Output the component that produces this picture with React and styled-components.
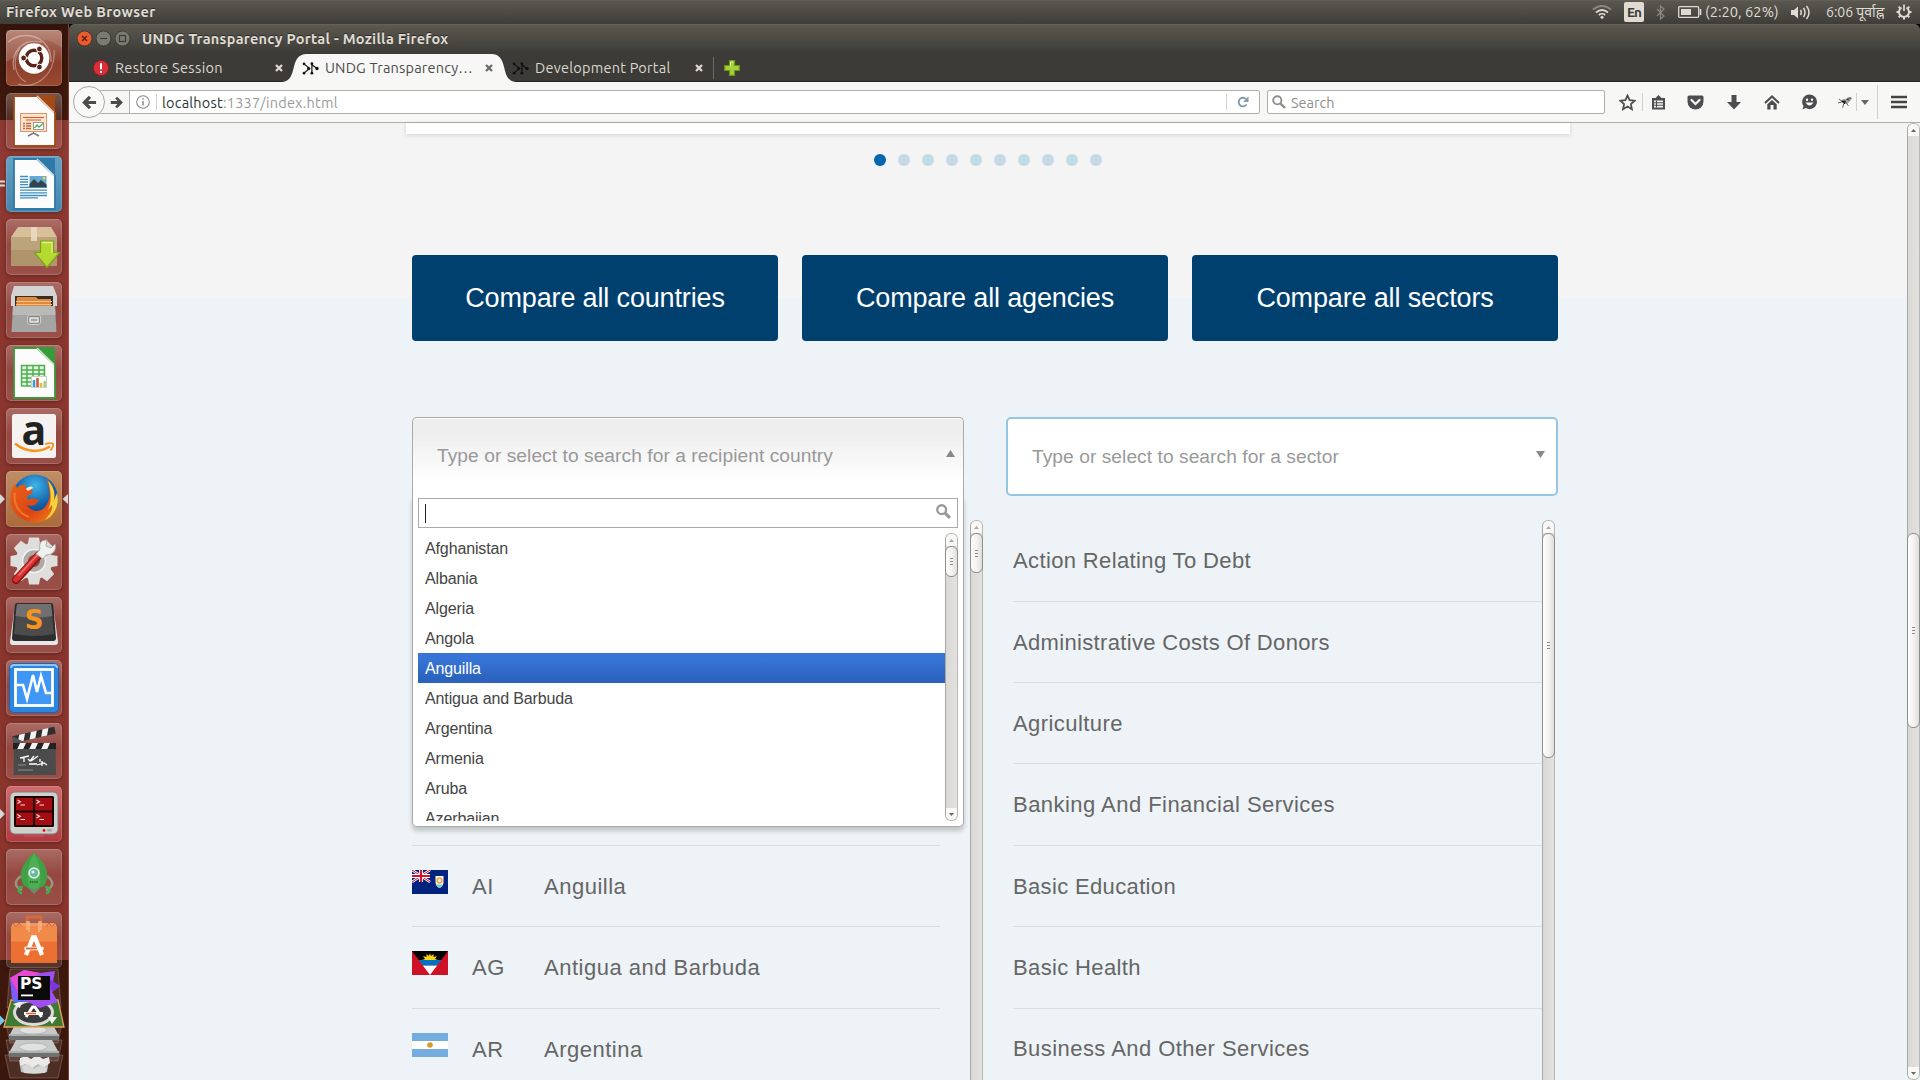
import React from "react";
import styled, { createGlobalStyle } from "styled-components";

const Global = createGlobalStyle`
  * { box-sizing: border-box; }
  html, body { margin: 0; padding: 0; overflow: hidden; }
  body { font-family: "Liberation Sans", Arial, sans-serif; background: #3c3b37; }
  svg { display: block; flex: none; }
`;

const uiFont = `Ubuntu, "Noto Sans", "Open Sans", "DejaVu Sans", sans-serif`;

/* ---------- desktop shell ---------- */

const Desktop = styled.div`
  width: 1920px;
  height: 1080px;
  display: flex;
  flex-direction: column;
  overflow: hidden;
  background: #000;
`;

const Panel = styled.header`
  height: 24px;
  flex: none;
  display: flex;
  align-items: center;
  padding: 0 8px 0 6px;
  background: linear-gradient(#67655b 0, #5a574f 1px, #55534b 5px, #3f3e39 23px);
  color: #dfdbd2;
  font: 14.5px/22px ${uiFont};
`;

const PanelTitle = styled.div`
  flex: 1;
  font-weight: 700;
  font-size: 14.5px;
  white-space: nowrap;
  letter-spacing: ${(p) => p.$track || 0}px;
  text-shadow: 0 -1px 0 #2c2b27;
`;

const TraySlot = styled.div`
  width: ${(p) => p.$w}px;
  display: flex;
  align-items: center;
  white-space: nowrap;
  font-size: ${(p) => p.$size || 14}px;
`;

const LangBadge = styled.div`
  width: 20px;
  height: 20px;
  border-radius: 2px;
  background: #dfdbd2;
  color: #3c3b37;
  font-size: 13.5px;
  font-weight: 600;
  line-height: 20px;
  text-align: center;
  letter-spacing: -1px;
`;

const Work = styled.div`
  flex: 1;
  min-height: 0;
  display: flex;
`;

/* ---------- launcher ---------- */

const Launcher = styled.nav`
  width: 69px;
  flex: none;
  display: flex;
  flex-direction: column;
  padding-top: 6px;
  border-right: 1px solid rgba(196, 90, 100, 0.55);
  background: linear-gradient(
    #35150b 0, #431a0e 96px,
    #8f3a32 96px, #8b362e 300px, #8a352c 936px,
    #3e180d 936px, #3a170c 100%
  );
`;

const LauncherRow = styled.div`
  height: 63px;
  flex: none;
  display: flex;
  align-items: flex-start;
`;

const Pip = styled.div`
  width: 6px;
  height: 56px;
  flex: none;
  display: flex;
  align-items: center;
`;

const Tile = styled.div`
  width: 56px;
  height: 56px;
  border-radius: 5px;
  background: ${(p) => p.$bg || "linear-gradient(rgba(255,255,255,.27), rgba(255,255,255,.09) 45%, rgba(255,255,255,.13))"};
  box-shadow: inset 0 0 0 1px rgba(255, 255, 255, 0.16), 0 1px 4px rgba(0, 0, 0, 0.35);
`;

const Stack = styled.div`
  margin-top: -7px;
`;

/* ---------- browser window ---------- */

const Window = styled.div`
  flex: 1;
  min-width: 0;
  display: flex;
  flex-direction: column;
  border-radius: 6px 6px 0 0;
  overflow: hidden;
  background: #3c3b37;
`;

const TitleBar = styled.div`
  height: 28px;
  flex: none;
  display: flex;
  align-items: center;
  padding-left: 8px;
  background: linear-gradient(#67655b 0, #5a574f 2px, #3e3d38 100%);
  color: #dfdbd2;
  font-family: ${uiFont};
`;

const TitleText = styled(PanelTitle)`
  margin-left: 8px;
`;

const TabStrip = styled.div`
  height: 30px;
  flex: none;
  display: flex;
  padding-top: 2px;
  border-bottom: 1px solid #262522;
  background: #3c3b37;
`;

const Tab = styled.div`
  position: relative;
  width: ${(p) => p.$w}px;
  height: 28px;
  display: flex;
  align-items: center;
  margin-left: ${(p) => p.$pull || 0}px;
  padding-left: ${(p) => p.$pad || 0}px;
  color: ${(p) => (p.$active ? "#4c4c4c" : "#dbd7ce")};
  font: 14.5px/28px ${uiFont};
`;

const TabShape = styled.svg`
  position: absolute;
  left: 0;
  top: 0;
`;

const TabLabel = styled.span`
  position: relative;
  width: ${(p) => p.$w}px;
  flex: none;
  margin-left: 6px;
  white-space: nowrap;
  letter-spacing: ${(p) => p.$track || 0}px;
`;

const Layered = styled.div`
  position: relative;
`;

const TabDivider = styled.div`
  width: 1px;
  height: 22px;
  margin: 3px 10px 0 9px;
  background: #6c6b66;
`;

const Toolbar = styled.div`
  height: 41px;
  flex: none;
  display: flex;
  align-items: center;
  padding: 0 0 0 4px;
  background: #f7f7f5;
  border-bottom: 1px solid #b0afa9;
  font: 14.5px/22px ${uiFont};
`;

const BackButton = styled.div`
  width: 32px;
  height: 32px;
  flex: none;
  z-index: 1;
  border: 1px solid #a9a8a3;
  border-radius: 50%;
  background: #f9f9f8;
  display: flex;
  align-items: center;
  justify-content: center;
`;

const UrlBar = styled.div`
  height: 24px;
  width: 1161px;
  flex: none;
  margin-left: -6px;
  display: flex;
  align-items: stretch;
  background: #fff;
  border: 1px solid #b0afaa;
  border-radius: 2px;
`;

const ForwardButton = styled.div`
  width: 30px;
  display: flex;
  align-items: center;
  justify-content: flex-end;
  padding-right: 6px;
  background: #f7f7f5;
  border-right: 1px solid #b0afaa;
`;

const Centered = styled.div`
  width: ${(p) => p.$w}px;
  padding-left: ${(p) => p.$lead || 0}px;
  flex: none;
  display: flex;
  align-items: center;
  justify-content: center;
`;

const Rule = styled.div`
  width: 1px;
  height: ${(p) => p.$h || 16}px;
  flex: none;
  align-self: center;
  background: #d2d1cd;
`;

const UrlText = styled.div`
  flex: 1;
  padding: 0 0 0 5px;
  line-height: 23px;
  color: #9a9a9a;
  letter-spacing: 0.22px;
  b { font-weight: 400; color: #2e3436; }
`;

const SearchBox = styled.div`
  width: 338px;
  height: 24px;
  flex: none;
  margin-left: 7px;
  padding-left: 4px;
  display: flex;
  align-items: center;
  gap: 5px;
  border: 1px solid #b0afaa;
  border-radius: 2px;
  background: #fff;
  color: #8e8e8e;
`;

const SearchHint = styled.span`
  padding-top: 1px;
`;

/* ---------- page ---------- */

const Viewport = styled.div`
  flex: 1;
  min-height: 0;
  display: flex;
  background: #edf3f6;
`;

const Page = styled.main`
  flex: 1;
  min-width: 0;
  display: flex;
  flex-direction: column;
  background: linear-gradient(#f4f4f4 175px, #edf3f6 175px);
`;

const CardFoot = styled.div`
  width: 1164px;
  height: 11px;
  flex: none;
  margin-left: 337px;
  background: #fff;
  box-shadow: 0 1px 5px rgba(0, 0, 0, 0.14);
`;

const Dots = styled.div`
  display: flex;
  gap: 12px;
  margin: 20px 0 0 805px;
`;

const Dot = styled.i`
  width: 12px;
  height: 12px;
  border-radius: 50%;
  background: ${(p) => (p.$on ? "#0068b3" : "#c5dae7")};
`;

const CompareRow = styled.div`
  display: flex;
  gap: 24px;
  margin: 89px 0 0 343px;
`;

const CompareButton = styled.div`
  width: 366px;
  height: 86px;
  border-radius: 4px;
  background: #00406f;
  color: #fff;
  font-size: 27px;
  line-height: 87px;
  letter-spacing: -0.15px;
  text-align: center;
`;

const Columns = styled.div`
  flex: 1;
  min-height: 0;
  display: flex;
  gap: 23px;
  margin: 76px 0 0 343px;
`;

const Column = styled.section`
  position: relative;
  width: ${(p) => p.$w}px;
  display: flex;
  flex-direction: column;
`;

const Select = styled.div`
  width: 552px;
  height: 79px;
  flex: none;
  display: flex;
  align-items: center;
  padding: 0 ${(p) => (p.$open ? 8 : 11)}px 0 24px;
  border: 2px solid #97c5e4;
  border-radius: 5px;
  background: #fff;
  color: #999;
  font-size: 19.2px;
  line-height: 22px;
  letter-spacing: 0.05px;
  > svg { margin-bottom: 4px; }
  ${(p) => p.$open && `
    border: 1px solid #aaa;
    border-bottom: 0;
    border-radius: 5px 5px 0 0;
    background: linear-gradient(#eee 20%, #fff 80%);
    box-shadow: 0 1px 0 #fff inset;
    line-height: 24px;
    padding-bottom: 3px;
  `}
`;

const SelectLabel = styled.span`
  flex: 1;
  white-space: nowrap;
`;

const Menu = styled.div`
  position: absolute;
  left: 0;
  top: 79px;
  width: 552px;
  height: 331px;
  z-index: 2;
  padding: 2px 5px 5px;
  background: #fff;
  border: 1px solid #aaa;
  border-top: 0;
  border-radius: 0 0 5px 5px;
  box-shadow: 0 4px 5px rgba(0, 0, 0, 0.2);
`;

const Filter = styled.div`
  height: 30px;
  display: flex;
  align-items: center;
  justify-content: space-between;
  padding: 0 6px;
  border: 1px solid #aaa;
  > svg { margin-bottom: 3px; }
`;

const Caret = styled.i`
  width: 1px;
  height: 19px;
  background: #222;
`;

const MenuBody = styled.div`
  display: flex;
  height: 288px;
  margin-top: 5px;
  overflow: hidden;
`;

const Options = styled.div`
  flex: 1;
`;

const Option = styled.div`
  height: 30px;
  padding: 0 7px;
  font-size: 16px;
  line-height: 32px;
  letter-spacing: -0.13px;
  color: ${(p) => (p.$hot ? "#fff" : "#444")};
  background: ${(p) => (p.$hot ? "linear-gradient(#3875d7 20%, #2a62bc 90%)" : "none")};
`;

const Scroller = styled.div`
  flex: 1;
  min-height: 0;
  margin: 24px 0 0 ${(p) => p.$indent || 0}px;
  display: flex;
  overflow: hidden;
`;

const List = styled.div`
  width: ${(p) => p.$w}px;
  flex: none;
  margin-right: ${(p) => p.$gap || 0}px;
  padding-top: ${(p) => p.$skip || 0.25}px;
`;

const Divider = styled.div`
  height: 1px;
  background: #d5dee8;
`;

const Item = styled.div`
  height: 81.4px;
  padding-top: 27.9px;
  display: flex;
  align-items: flex-start;
  border-bottom: 1px solid #d5dee8;
  color: #666;
  font-size: 22px;
  line-height: 26px;
  letter-spacing: ${(p) => p.$track || 0}px;
`;

const Code = styled.span`
  width: 72px;
  margin-left: 24px;
`;

const FlagBox = styled.div`
  margin-top: -3.8px;
`;

/* ---------- scrollbar ---------- */

const Track = styled.div`
  width: 13px;
  flex: none;
  display: flex;
  flex-direction: column;
  border: 1px solid #b9b7b2;
  border-left-color: #aaa8a2;
  border-bottom-width: ${(p) => (p.$cut ? 0 : 1)}px;
  border-radius: ${(p) => (p.$cut ? "6px 6px 0 0" : "6px")};
  background: linear-gradient(90deg, #d9d8d5, #e3e2e0);
`;

const ArrowEnd = styled.div`
  height: 12px;
  flex: none;
  display: flex;
  align-items: center;
  justify-content: center;
  background: #f8f8f7;
  border-radius: ${(p) => (p.$down ? "0 0 5px 5px" : "5px 5px 0 0")};
`;

const Space = styled.div`
  height: ${(p) => p.$h}px;
  width: ${(p) => p.$w}px;
  flex: ${(p) => (p.$h === undefined && p.$w === undefined ? 1 : "none")};
`;

const Thumb = styled.div`
  height: ${(p) => p.$h}px;
  flex: none;
  margin: 0 -1px;
  display: flex;
  flex-direction: column;
  align-items: center;
  justify-content: center;
  gap: 2px;
  border: 1px solid #8f8e8a;
  border-radius: 6px;
  background: linear-gradient(90deg, #fdfdfd, #f4f3f2 50%, #dfdedb);
  i { width: 3px; height: 1px; background: #8d8c88; }
`;

const Tri = ({ down, w = 5, h = 3, color = "#777" }) => (
  <svg width={w} height={h} viewBox="0 0 10 10" preserveAspectRatio="none">
    <path d={down ? "M0 0H10L5 10Z" : "M0 10H10L5 0Z"} fill={color} />
  </svg>
);

const Scrollbar = ({ offset = 0, thumb, cut, faded }) => (
  <Track $cut={cut}>
    <ArrowEnd><Tri color={faded ? "#aaa" : "#666"} /></ArrowEnd>
    <Space $h={offset} />
    <Thumb $h={thumb}><i /><i /><i /></Thumb>
    <Space />
    {!cut && <ArrowEnd $down><Tri down color="#666" /></ArrowEnd>}
  </Track>
);

/* ---------- launcher artwork (56 x 56) ---------- */

const Svg56 = ({ children }) => (
  <svg width="56" height="56" viewBox="0 0 56 56">{children}</svg>
);

const UbuntuIcon = () => (
  <Svg56>
    <g fill="none" stroke="#fff" opacity=".35">
      <path d="M2 12C20 -2 46 8 45 32" strokeWidth="1.5" />
      <path d="M8 40C4 20 18 8 36 12" strokeWidth="1.5" />
      <path d="M12 54C30 60 50 44 48 20" strokeWidth="1.2" />
      <path d="M20 52C8 46 6 30 14 18" strokeWidth="1.2" />
    </g>
    <path d="M0 0H56V18C38 4 18 8 10 26L0 32Z" fill="#fff" opacity=".12" />
    <circle cx="28" cy="28.5" r="15.3" fill="#fff" />
    <circle cx="28" cy="28" r="7.8" fill="none" stroke="#5a2317" strokeWidth="3.4" />
    <g stroke="#fff" strokeWidth="1.4">
      <path d="M28 28L18 28M28 28L33 37M28 28L33 19" />
    </g>
    <circle cx="28" cy="28" r="5.8" fill="#fff" />
    <g fill="#5a2317" stroke="#fff" strokeWidth="1">
      <circle cx="17.6" cy="28" r="2.9" />
      <circle cx="33.4" cy="19" r="2.9" />
      <circle cx="33.4" cy="37" r="2.9" />
    </g>
  </Svg56>
);

const Sheet = ({ color, children }) => (
  <Svg56>
    <path d="M8 3H31L49 20V53H8Z" fill="#fcfcfc" stroke={color} strokeWidth="1.8" />
    <path d="M30 2H49V20Z" fill={color} />
    <path d="M31 3L48 19.5" stroke="#fff" strokeWidth="1.5" opacity=".75" />
    {children}
  </Svg56>
);

const ImpressIcon = () => (
  <Sheet color="#a44a16">
    <rect x="14.5" y="20.5" width="26" height="18" fill="#fbe3d2" stroke="#e19468" />
    <path d="M17 24.5H38M20 27H35" stroke="#d9581b" strokeWidth="1" />
    <path d="M17 30.5H25M17 33H25M17 35.5H25" stroke="#c36a3c" strokeWidth="1.3" strokeDasharray="2 1 9" />
    <rect x="27.5" y="29.5" width="10" height="7" fill="#fff" stroke="#9a9a9a" />
    <path d="M28.5 35L31 32L33 34L37 30.5" fill="none" stroke="#58b157" strokeWidth="1.3" />
    <path d="M27.5 39V41M22 43L27.5 40L33 43" stroke="#777" fill="none" strokeWidth="1.5" />
  </Sheet>
);

const WriterIcon = () => (
  <Sheet color="#2f7aa6">
    <path d="M14 20.5H22M14 23.3H22M14 26H22M14 28.7H22M14 31.4H41M14 34.1H41M14 36.8H41M14 39.5H41M14 41.9H32" stroke="#3f8ebb" strokeWidth="1.3" />
    <rect x="23.5" y="20" width="17" height="11" fill="#64a9d8" />
    <path d="M23.5 31L23.5 28L28 23L32 27L35 24L40.5 28.5V31Z" fill="#34444a" />
    <circle cx="38" cy="22" r="1.5" fill="#f4d03f" />
  </Sheet>
);

const PackageIcon = () => (
  <Svg56>
    <path d="M12 8H45L51 18H5Z" fill="#d9c09a" />
    <path d="M5 18H51V47H5Z" fill="#b0946c" />
    <path d="M5 18H51V31H5Z" fill="#bda37b" />
    <rect x="25" y="8" width="6" height="14" fill="#e9dcc4" opacity=".85" />
    <path d="M34.5 22H47.5V33.5H53.5L41 48.5L28.5 33.5H34.5Z" fill="#b4d931" stroke="#7da01a" strokeWidth="1.2" />
    <path d="M36 23.5H46V34" fill="none" stroke="#e0f184" strokeWidth="1.3" />
  </Svg56>
);

const FilesIcon = () => (
  <Svg56>
    <path d="M8 4H47L51 14V24H5V14Z" fill="#d3d3d3" />
    <path d="M9 14H47V25H9Z" fill="#3a2d28" />
    <path d="M11 15H30L32 17H45V25H10Z" fill="#dd8a3c" />
    <path d="M10 19.5H46M10 22.5H46" stroke="#f3c08a" strokeWidth="1.2" />
    <path d="M7 24H49L50.5 50H5.5Z" fill="#a4a4a2" />
    <path d="M7 24H49L49.5 33H6.5Z" fill="#b9b9b7" />
    <rect x="21.5" y="33" width="13" height="9.5" rx="2" fill="#8b8b89" stroke="#cfcfcd" />
    <rect x="24" y="36" width="8" height="4" fill="#a8a8a6" stroke="#f2f2f2" strokeWidth="1.3" />
  </Svg56>
);

const CalcIcon = () => (
  <Sheet color="#379b3a">
    <rect x="15" y="20" width="24" height="21" fill="#e3f5e0" />
    <path d="M15 20.5H39M15 25H39M15 29H39M15 33H39M15 37H39M15 41H39M15.5 20V41M21 20V41M27 20V41M33 20V41M38.5 20V41" stroke="#4fae4f" strokeWidth="1.5" />
    <rect x="25.5" y="31.5" width="15" height="11" fill="#fff" stroke="#ccc" />
    <path d="M28 42V35" stroke="#3e9ad8" strokeWidth="2.6" />
    <path d="M31.5 42V33" stroke="#cf5b32" strokeWidth="2.6" />
    <path d="M35 42V38" stroke="#e9b934" strokeWidth="2.6" />
    <path d="M38.7 42V36" stroke="#9ad07a" strokeWidth="2.4" />
  </Sheet>
);

const AmazonIcon = () => (
  <Svg56>
    <rect x="6" y="6" width="44" height="44" rx="2.5" fill="#f4f3f2" />
    <text x="28" y="36.5" textAnchor="middle" fontFamily="Open Sans, Noto Sans, sans-serif" fontWeight="700" fontSize="41" fill="#222">a</text>
    <path d="M9 35.5C20 44.5 33 45 44 38.5" fill="none" stroke="#f7931e" strokeWidth="2.6" />
    <path d="M39 36.2C43 34.7 47 35 46.8 35.8C47.5 37 46 40.5 44.5 42.5" fill="none" stroke="#f7931e" strokeWidth="1.9" />
  </Svg56>
);

const FirefoxIcon = () => (
  <Svg56>
    <defs>
      <radialGradient id="globe" cx=".5" cy=".25" r=".8">
        <stop offset="0" stopColor="#3fb4e8" /><stop offset=".55" stopColor="#1260a8" /><stop offset="1" stopColor="#0a2a66" />
      </radialGradient>
      <linearGradient id="fur" x1="0" y1="0" x2="1" y2="1">
        <stop offset="0" stopColor="#e9651c" /><stop offset=".6" stopColor="#dd4413" /><stop offset="1" stopColor="#f08a1c" />
      </linearGradient>
    </defs>
    <circle cx="29" cy="26" r="22.5" fill="url(#globe)" />
    <path d="M40 8C48 14 50 22 47 30L50 24C54 34 49 47 36 50.5C24 54 9 47 5 34C3 26 5 18 9 12L11 17C13 14 16 13 20 14C19 16 20 18 22 18L26 19C28 21 24 24 21 25L22 29C26 26 30 28 33 29C31 34 25 36 21 34C25 41 34 42 39 36C45 29 45 18 40 8Z" fill="url(#fur)" />
    <path d="M42 10C50 18 49 27 47 32L51 22C54 34 48 45 39 49C45 42 47 38 46 34L42 39C46 30 45 19 42 10Z" fill="#f8d23b" />
    <path d="M20 18C23 15 26 15 27 17L22 20Z" fill="#f6e7cf" />
    <path d="M9 22C7 32 12 42 23 46" fill="none" stroke="#f38a2c" strokeWidth="2" opacity=".7" />
  </Svg56>
);

const SettingsIcon = () => (
  <Svg56>
    <g fill="#dededc">
      <circle cx="28" cy="27" r="18.5" />
      {[0, 45, 90, 135, 180, 225, 270, 315].map((a) => (
        <path key={a} d="M23 3.5H33L34.5 12H21.5Z" transform={`rotate(${a} 28 27)`} />
      ))}
    </g>
    <circle cx="28" cy="27" r="11.5" fill="#b1a9a6" stroke="#f3f3f3" strokeWidth="1.5" />
    <circle cx="28" cy="27" r="6" fill="#8b4a42" />
    <path d="M10 46L34 20" stroke="#8f1417" strokeWidth="8" strokeLinecap="round" />
    <path d="M10 45.5L33 20" stroke="#d83030" strokeWidth="5.5" strokeLinecap="round" />
    <path d="M13 41L31 21.5" stroke="#f07a72" strokeWidth="1.4" strokeLinecap="round" />
    <path d="M30 20L37 25L40 21C46 21 51 17 49 10L45 14L40 12L41 6C34 6 33 10 34 15Z" fill="#f1f1f0" stroke="#a9a9a7" strokeWidth="1" />
  </Svg56>
);

const SublimeIcon = () => (
  <Svg56>
    <path d="M9 7H47L52 45Q52 48 49 48H7Q4 48 4 45Z" fill="#e6e6e6" />
    <path d="M11 6H45Q47 6 47.5 9L50 41Q50 44 47 44H9Q6 44 6 41L8.5 9Q9 6 11 6Z" fill="#2d2d2d" />
    <path d="M11 7H45L48 37Q28 41 8 37Z" fill="#4b4b4b" />
    <path d="M11 7H45L46.5 19Q28 22 9.5 19Z" fill="#707070" />
    <text x="28" y="31.5" textAnchor="middle" fontFamily="DejaVu Sans, sans-serif" fontWeight="700" fontSize="26" fill="#f79420">S</text>
  </Svg56>
);

const MonitorIcon = () => (
  <Svg56>
    <rect x="3.5" y="3.5" width="49" height="49" rx="4.5" fill="#2b86e0" stroke="#1565bd" />
    <path d="M5 8Q5 5 8 5H48Q51 5 51 8" fill="none" stroke="#8fc6ff" strokeWidth="2" />
    <rect x="9.5" y="9.5" width="37" height="36" fill="#3f97f5" stroke="#fff" strokeWidth="2.8" />
    <path d="M11 25H17L21 39L27 15L31 32L35 16L40 33H46" fill="none" stroke="#fff" strokeWidth="2.6" />
  </Svg56>
);

const ClapperIcon = () => (
  <Svg56>
    <g transform="rotate(-13 8 16)">
      <rect x="7" y="13" width="43" height="7" fill="#2f2f2f" />
      <path d="M14 13H20L17 20H11ZM26 13H32L29 20H23ZM38 13H44L41 20H35Z" fill="#f2f2f2" />
    </g>
    <path d="M6 13L18 19L8 24Z" fill="#545454" />
    <rect x="7" y="20" width="43" height="6.5" fill="#222" />
    <path d="M14 20H20L17 26.5H11ZM26 20H32L29 26.5H23ZM38 20H44L41 26.5H35Z" fill="#f2f2f2" />
    <path d="M8 26H49.5L50 52H7.5Z" fill="#4b4b4b" />
    <path d="M14 35L23 33M18 34V39M22 36L24 38L28 33M25 38L32 33M23 41H31M34 36V39M31 42L38 40L41 42M36 38V43" stroke="#fff" strokeWidth="1.3" fill="none" />
    <path d="M12 42H20M12 47H27" stroke="#777" strokeWidth="1.3" />
  </Svg56>
);

const TerminatorIcon = () => (
  <Svg56>
    <rect x="4" y="6" width="48" height="42" rx="5" fill="#cfd0cb" stroke="#7f807b" />
    <rect x="8" y="10" width="40" height="31" rx="1.5" fill="#1a0404" />
    <g fill="#a50c12">
      <rect x="10" y="12" width="17" height="12.5" /><rect x="29" y="12" width="17" height="12.5" />
      <rect x="10" y="26.5" width="17" height="12.5" /><rect x="29" y="26.5" width="17" height="12.5" />
    </g>
    <g fill="none" stroke="#ffd9d9" strokeWidth="1.1">
      <path d="M11.5 14L14.5 15.8L11.5 17.5M14.5 19H19M30.5 14L33.5 15.8L30.5 17.5M33.5 19H38M11.5 28.5L14.5 30.3L11.5 32M14.5 33.5H19M30.5 28.5L33.5 30.3L30.5 32M33.5 33.5H38" />
    </g>
    <circle cx="38" cy="44.5" r="1.4" fill="#e0151b" />
    <rect x="41" y="43" width="5" height="2.5" rx="1" fill="#a7a8a3" />
    <path d="M18 50H38" stroke="#d77" opacity=".5" />
  </Svg56>
);

const RocketIcon = () => (
  <Svg56>
    <path d="M15 27C8 32 8 38 16 41M41 27C48 32 48 38 40 41" fill="none" stroke="#9aa88e" strokeWidth="2.5" opacity=".8" />
    <path d="M17 38C12 37 11 43 16 44.5M39 38C44 37 45 43 40 44.5" fill="none" stroke="#3fae49" strokeWidth="2.4" />
    <path d="M22 39H34L28 45Z" fill="#6e8a66" />
    <path d="M28 4C40 14 45 26 38 37Q28 43 18 37C11 26 16 14 28 4Z" fill="#3fa046" />
    <path d="M28 4C34 14 36 26 33 39Q28 40.5 23 39C20 26 22 14 28 4Z" fill="#57b85a" opacity=".6" />
    <circle cx="28" cy="24" r="5.8" fill="#dcefe2" />
    <circle cx="28" cy="24" r="4" fill="#69b7a0" />
    <circle cx="27" cy="23" r="1.6" fill="#dff7ef" />
    <path d="M24 33H32" stroke="#2a6b33" strokeWidth="2" strokeDasharray="1.2 1" />
    <path d="M18 51.5H38" stroke="#6b6a5a" strokeWidth="1.5" opacity=".5" />
  </Svg56>
);

const AmpA = ({ color }) => (
  <g fill="none" stroke={color}>
    <path d="M20 43L27 25.5H29L36 43" strokeWidth="4.3" />
    <path d="M18.5 36.5H37.5" strokeWidth="3.5" />
  </g>
);

const SoftwareIcon = () => (
  <Svg56>
    <path d="M21 19V5H35V19" fill="none" stroke="#d66b38" strokeWidth="2.8" />
    <path d="M7 11H49L51 15H5Z" fill="#f29a5e" />
    <path d="M7 11L10 15L13 11L16 15M40 15L43 11L46 15L49 11" stroke="#c95e2e" fill="none" />
    <rect x="5" y="14.5" width="46" height="36.5" fill="#ec7032" />
    <rect x="5" y="14.5" width="46" height="15" fill="#f08a48" />
    <path d="M21 18V10H23V20M33 20V10H35V18" stroke="#f6b184" strokeWidth="1.5" fill="none" />
    <AmpA color="#fff" />
    <path d="M20 36.5H31" stroke="#e0622a" strokeWidth="1.8" />
  </Svg56>
);

const StackArt = () => (
  <svg width="68" height="112" viewBox="0 0 68 112">
    <g fill="rgba(255,255,255,.1)" stroke="rgba(255,255,255,.25)" strokeWidth=".8">
      <path d="M10 1H58L61 40H7Z" />
      <path d="M6 56H62L58 75H10Z" /><path d="M6 72H62L58 93H10Z" /><path d="M5 87H63L58 110H10Z" />
    </g>
    <path d="M19 92H49L47 104Q34 108 21 104Z" fill="#bdbdbb" />
    <path d="M20 90L26 88L31 91L37 87L43 91L49 89L50 95L44 99L38 96L32 100L25 96L20 98Z" fill="#e9e9e8" />
    <path d="M22 98L28 96L34 101L41 97L47 100L45 105L24 105Z" fill="#d8d8d7" />
    {[72, 55].map((y) => (
      <g key={y}>
        <path d={`M16 ${y}H52L59 ${y + 13}H9Z`} fill="#c7c8c8" />
        <path d={`M9 ${y + 11}H59V${y + 16}Q59 ${y + 17} 57 ${y + 17}H11Q9 ${y + 17} 9 ${y + 16}Z`} fill="#6f7070" />
        <ellipse cx="33" cy={y + 7} rx="14" ry="4" fill="#dfe0e0" stroke="#aaa" strokeWidth=".7" />
        <path d={`M9 ${y + 12}H59`} stroke="#ededed" strokeWidth="1.2" />
      </g>
    ))}
    <path d="M11 32H58L64 59H4Z" fill="#3f7a33" stroke="#e7a45c" strokeWidth="1.3" />
    <ellipse cx="33.5" cy="44.5" rx="19" ry="12" fill="#3b3b3b" stroke="#dcdcda" strokeWidth="3" />
    <path d="M13 36L22 33L20 40ZM48 49L57 49L52 56Z" fill="#eee" />
    <path d="M26 49L32.5 39H35L41.5 49M24 45.5H43" stroke="#fff" strokeWidth="3" fill="none" />
    <path d="M26 45.5H36" stroke="#e2642b" strokeWidth="1.6" />
    <path d="M10 10L24 2L40 5L55 3L53 14L60 18L52 24L58 34L40 40L28 34L12 32Z" fill="#9f4ff0" />
    <path d="M10 10L24 2L40 5L30 12L18 24Z" fill="#e44bd0" />
    <path d="M10 10L16 30L28 34L14 34Z" fill="#5a6bff" />
    <path d="M48 10L60 18L52 24Z" fill="#7a35e0" />
    <rect x="18" y="8" width="32" height="24" fill="#0b0b0b" />
    <text x="20" y="20.5" fontFamily="DejaVu Sans, sans-serif" fontWeight="700" fontSize="15.5" fill="#fff">PS</text>
    <rect x="21" y="26.5" width="12" height="1.8" fill="#fff" />
    <path d="M0 47.5L5 52.5L0 57.5Z" fill="#7cc4ea" />
  </svg>
);

const arrow = (right) => (
  <svg width="6" height="10" viewBox="0 0 6 10">
    <path d={right ? "M6 0V10L0.5 5Z" : "M0 0V10L5 5Z"} fill="#d9d9d9" />
  </svg>
);
const bars = (
  <svg width="6" height="10" viewBox="0 0 6 10"><path d="M0 2.5H5M0 6.5H5" stroke="#ddd" strokeWidth="2" /></svg>
);

const launcherItems = [
  { Icon: UbuntuIcon, bg: "linear-gradient(#b07767, #8c3f2c 60%, #98492f)" },
  { Icon: ImpressIcon },
  { Icon: WriterIcon, bg: "linear-gradient(#64a1c4, #4586ae)", left: bars },
  { Icon: PackageIcon },
  { Icon: FilesIcon },
  { Icon: CalcIcon },
  { Icon: AmazonIcon },
  { Icon: FirefoxIcon, bg: "linear-gradient(#c08e66, #ab6b3a)", left: arrow(false), right: arrow(true) },
  { Icon: SettingsIcon },
  { Icon: SublimeIcon },
  { Icon: MonitorIcon },
  { Icon: ClapperIcon },
  { Icon: TerminatorIcon, bg: "linear-gradient(#cf6c70, #b23a40)", left: arrow(false) },
  { Icon: RocketIcon },
  { Icon: SoftwareIcon },
];

/* ---------- small chrome artwork ---------- */

const WindowButton = ({ kind }) => (
  <svg width="19" height="18" viewBox="0 0 19 18">
    <circle cx="7.5" cy="9.5" r="7.5" fill={kind === "close" ? "#eb5a2b" : "#7b7a72"} stroke="#33322e" strokeWidth=".8" />
    {kind === "close" && <path d="M5 7L10 12M10 7L5 12" stroke="#55200e" strokeWidth="1.3" />}
    {kind === "min" && <path d="M4 9.5H11" stroke="#3a3935" strokeWidth="1.2" />}
    {kind === "max" && <rect x="4.5" y="6.5" width="6" height="6" fill="none" stroke="#3a3935" strokeWidth="1.2" />}
  </svg>
);

const ErrorIcon = () => (
  <svg width="16" height="16" viewBox="0 0 16 16">
    <circle cx="8" cy="8" r="7.6" fill="#d8303a" stroke="#a5121d" strokeWidth=".8" />
    <rect x="7" y="3" width="2" height="6.5" rx=".8" fill="#fff" /><rect x="7" y="11" width="2" height="2" rx=".8" fill="#fff" />
  </svg>
);

const SiteIcon = ({ color }) => (
  <svg width="17" height="13" viewBox="0 0 18 14">
    <path d="M2 2L8 7L2 12M10.5 1V13M10.5 3L16 7" fill="none" stroke={color} strokeWidth="1.3" />
    <g fill={color}>
      <circle cx="2" cy="2" r="1.4" /><circle cx="2" cy="12" r="1.4" /><circle cx="7" cy="7" r="1.7" />
      <circle cx="10.5" cy="1.8" r="1.5" /><circle cx="10.5" cy="12" r="1.5" /><circle cx="16" cy="7" r="1.8" />
    </g>
  </svg>
);

const CloseX = ({ color }) => (
  <svg width="8" height="8" viewBox="0 0 8 8"><path d="M1 1L7 7M7 1L1 7" stroke={color} strokeWidth="2.3" /></svg>
);

const PlusIcon = () => (
  <svg width="16" height="16" viewBox="0 0 16 16">
    <path d="M5.5 .7H10.5V5.5H15.3V10.5H10.5V15.3H5.5V10.5H.7V5.5H5.5Z" fill="#a6cf3a" stroke="#6b9616" strokeWidth="1.2" />
    <path d="M6.5 6.5V2H9.5" fill="none" stroke="#dbf08c" />
  </svg>
);

const NavArrow = ({ flip, size }) => (
  <svg width={size} height={size} viewBox="0 0 16 16">
    <path d={flip ? "M7.5 2L13.5 8L7.5 14M13 8H1" : "M8.5 2L2.5 8L8.5 14M3 8H15"} fill="none" stroke="#4b4b4d" strokeWidth="3.4" />
  </svg>
);

const InfoIcon = () => (
  <svg width="14" height="14" viewBox="0 0 14 14">
    <circle cx="7" cy="7" r="6.3" fill="none" stroke="#8a8a8a" strokeWidth="1.1" />
    <path d="M7 6V10.5M7 3.2V4.8" stroke="#8a8a8a" strokeWidth="1.5" />
  </svg>
);

const Magnifier = ({ s = 14, color = "#8e8e8e", bold }) => (
  <svg width={s} height={s} viewBox="0 0 14 14">
    <circle cx="5.3" cy="5.3" r="4.1" fill="none" stroke={color} strokeWidth={bold ? 2.2 : 1.9} />
    <path d="M8.3 8.3L13 13" stroke={color} strokeWidth={bold ? 3 : 2.4} />
  </svg>
);

const ReloadIcon = () => (
  <svg width="12" height="12" viewBox="0 0 12 12">
    <path d="M9.5 8.5A4.3 4.3 0 1 1 9 3" fill="none" stroke="#8496aa" strokeWidth="1.8" />
    <path d="M11.5 .5V6H6Z" fill="#8496aa" />
  </svg>
);

const ink = "#4d4d4f";
const toolbarIcons = {
  star: <svg width="17" height="17" viewBox="0 0 17 17"><path d="M8.5 1.5L10.6 6.2L15.6 6.7L11.9 10.1L12.9 15.2L8.5 12.6L4.1 15.2L5.1 10.1L1.4 6.7L6.4 6.2Z" fill="none" stroke={ink} strokeWidth="1.8" /></svg>,
  clip: <svg width="15" height="15" viewBox="0 0 15 15"><path d="M1 3H4.5L7.5 0L10.5 3H14V14.5H1Z" fill={ink} /><path d="M3 5.5H12V12.5H3Z" fill="#f7f7f5" /><path d="M3 7.7H12M3 10.3H12M5.5 5.5V12.5" stroke={ink} strokeWidth="1.1" /></svg>,
  pocket: <svg width="17" height="15" viewBox="0 0 17 15"><path d="M2 .5H15Q16.5 .5 16.5 2V6.5A8 8 0 0 1 .5 6.5V2Q.5 .5 2 .5Z" fill={ink} /><path d="M4.5 5L8.5 9L12.5 5" fill="none" stroke="#f7f7f5" strokeWidth="2.2" strokeLinecap="round" /></svg>,
  down: <svg width="14" height="15" viewBox="0 0 14 15"><path d="M4.5 0H9.5V7H14L7 14.5L0 7H4.5Z" fill={ink} /></svg>,
  home: <svg width="16" height="15" viewBox="0 0 16 15"><path d="M1 8L8 1.5L15 8" fill="none" stroke={ink} strokeWidth="2.1" /><path d="M3.3 9.2L8 5L12.7 9.2V14.5H9.5V10H6.5V14.5H3.3Z" fill={ink} /></svg>,
  smile: <svg width="17" height="16" viewBox="0 0 17 16"><path d="M8.5 .5A7.3 7.3 0 1 1 4.8 14L1.5 15.5L2.5 12A7.3 7.3 0 0 1 8.5 .5Z" fill={ink} /><circle cx="6" cy="5.8" r="1.2" fill="#fff" /><circle cx="11" cy="5.8" r="1.2" fill="#fff" /><path d="M4.5 8.5Q8.5 14.5 12.5 8.5Z" fill="#fff" /></svg>,
  bug: <svg width="15" height="14" viewBox="0 0 16 14"><path d="M3 6Q5 3 8 4L13 1L15 3L12 7Q11 9 7 9L5 8Z" fill="#a6a6a4" /><path d="M4 6L8 6L7 9ZM9 4L12 5" stroke="#222" strokeWidth="1" fill="#222" /><path d="M1 4L4 6M0 8L4 7M6 9L5 13M9 8L11 11M10 3L14 3" stroke="#555" strokeWidth="1" fill="none" /></svg>,
};

const Burger = () => (
  <svg width="16" height="14" viewBox="0 0 16 14"><path d="M0 2H16M0 7H16M0 12H16" stroke="#444446" strokeWidth="2.6" /></svg>
);

const WifiIcon = () => (
  <svg width="20" height="14" viewBox="0 0 20 14" fill="none" strokeWidth="1.7">
    <path d="M1 4.5Q10 -3 19 4.5" stroke="#8b8981" /><path d="M4 7.5Q10 2.5 16 7.5" stroke="#dfdbd2" />
    <path d="M6.8 10Q10 7.5 13.2 10" stroke="#dfdbd2" /><circle cx="10" cy="12.3" r="1.5" fill="#dfdbd2" />
  </svg>
);
const BluetoothIcon = () => (
  <svg width="9" height="15" viewBox="0 0 9 15"><path d="M1 4L8 11L4.5 14V1L8 4L1 11" fill="none" stroke="#8b8981" strokeWidth="1.2" /></svg>
);
const BatteryIcon = () => (
  <svg width="24" height="12" viewBox="0 0 24 12"><rect x=".7" y=".7" width="20" height="10.6" rx="1" fill="none" stroke="#dfdbd2" strokeWidth="1.3" /><rect x="3" y="3" width="10" height="6" fill="#dfdbd2" /><path d="M22.5 3V9" stroke="#dfdbd2" strokeWidth="1.6" /></svg>
);
const VolumeIcon = () => (
  <svg width="20" height="15" viewBox="0 0 20 15"><path d="M0 5H3L7 1.5V13.5L3 10H0Z" fill="#dfdbd2" /><path d="M9.5 5Q11 7.5 9.5 10M12.5 3Q15.5 7.5 12.5 12M15.5 1Q20.5 7.5 15.5 14" fill="none" stroke="#dfdbd2" strokeWidth="1.5" /></svg>
);
const PowerGear = () => (
  <svg width="16" height="16" viewBox="0 0 16 16" stroke="#dfdbd2" fill="none">
    <path d="M5.5 3.6A5 5 0 1 0 10.5 3.6" strokeWidth="1.9" /><path d="M8 .5V7" strokeWidth="1.7" />
    <path d="M4 4L2.6 2.6M3 8H.5M4.3 11.7L2.7 13.3M8 13V15.5M11.7 11.7L13.3 13.3M13 8H15.5M12 4L13.4 2.6" strokeWidth="2" />
  </svg>
);

/* ---------- flags (36 x 24) ---------- */

const flags = {
  AI: (
    <svg width="36" height="24" viewBox="0 0 36 24">
      <rect width="36" height="24" fill="#00247d" />
      <path d="M0 0L18 12M18 0L0 12" stroke="#fff" strokeWidth="2.6" /><path d="M0 0L18 12M18 0L0 12" stroke="#cf142b" strokeWidth="1" />
      <path d="M9 0V12M0 6H18" stroke="#fff" strokeWidth="4" /><path d="M9 0V12M0 6H18" stroke="#cf142b" strokeWidth="2.2" />
      <path d="M23.5 6H31.5V12Q31.5 16 27.5 18Q23.5 16 23.5 12Z" fill="#f4f6f2" />
      <circle cx="27.5" cy="10.5" r="2.4" fill="none" stroke="#f0a430" strokeWidth="1.5" />
      <path d="M24 14.5H31Q30 17 27.5 18Q25 17 24 14.5Z" fill="#7cc7d8" />
    </svg>
  ),
  AG: (
    <svg width="36" height="24" viewBox="0 0 36 24">
      <rect width="36" height="24" fill="#000" />
      <path d="M18 2L19 5L21.5 3L21.5 6L25 5L23 8L26 9H10L13 8L11 5L14.5 6L14.5 3L17 5Z" fill="#fcd116" />
      <rect y="9" width="36" height="5.5" fill="#0072c6" /><rect y="14.5" width="36" height="9.5" fill="#fff" />
      <path d="M0 0L18 24H0ZM36 0L18 24H36Z" fill="#ce1126" />
    </svg>
  ),
  AR: (
    <svg width="36" height="24" viewBox="0 0 36 24">
      <rect width="36" height="24" fill="#74acdf" /><rect y="8" width="36" height="8" fill="#fff" /><circle cx="18" cy="12" r="2.8" fill="#d99a2b" />
    </svg>
  ),
};

const options = ["Afghanistan", "Albania", "Algeria", "Angola", "Anguilla", "Antigua and Barbuda", "Argentina", "Armenia", "Aruba", "Azerbaijan"];
const countries = [["AI", "Anguilla"], ["AG", "Antigua and Barbuda"], ["AR", "Argentina"]];
const sectors = [
  ["Action Relating To Debt", 0.37],
  ["Administrative Costs Of Donors", 0.33],
  ["Agriculture", 0.43],
  ["Banking And Financial Services", 0.46],
  ["Basic Education", 0.35],
  ["Basic Health", 0.36],
  ["Business And Other Services", 0.44],
];

export default function App() {
  return (
    <Desktop>
      <Global />
      <Panel>
        <PanelTitle $track={0.38}>Firefox Web Browser</PanelTitle>
        <TraySlot $w={32}><WifiIcon /></TraySlot>
        <TraySlot $w={32}><LangBadge>En</LangBadge></TraySlot>
        <TraySlot $w={22}><BluetoothIcon /></TraySlot>
        <TraySlot $w={27}><BatteryIcon /></TraySlot>
        <TraySlot $w={86} $size={14.7}>(2:20, 62%)</TraySlot>
        <TraySlot $w={35}><VolumeIcon /></TraySlot>
        <TraySlot $w={70} $size={14}>6:06 पूर्वाह्न</TraySlot>
        <PowerGear />
      </Panel>
      <Work>
        <Launcher>
          {launcherItems.map(({ Icon, bg, left, right }, i) => (
            <LauncherRow key={i}>
              <Pip>{left}</Pip>
              <Tile $bg={bg}><Icon /></Tile>
              <Pip>{right}</Pip>
            </LauncherRow>
          ))}
          <Stack><StackArt /></Stack>
        </Launcher>
        <Window>
          <TitleBar>
            <WindowButton kind="close" />
            <WindowButton kind="min" />
            <WindowButton kind="max" />
            <TitleText $track={0.28}>UNDG Transparency Portal - Mozilla Firefox</TitleText>
          </TitleBar>
          <TabStrip>
            <Tab $w={213} $pad={24}>
              <ErrorIcon />
              <TabLabel $w={160} $track={0.35}>Restore Session</TabLabel>
              <CloseX color="#dedad1" />
            </Tab>
            <Tab $w={234} $pad={20} $active>
              <TabShape width="234" height="28" viewBox="0 0 234 28">
                <path d="M0 28C17 27 6 0 25 0H209C228 0 217 27 234 28Z" fill="#f7f7f5" />
              </TabShape>
              <Layered><SiteIcon color="#111" /></Layered>
              <TabLabel $w={160} $track={0.2}>UNDG Transparency…</TabLabel>
              <Layered><CloseX color="#6b6b6b" /></Layered>
            </Tab>
            <Tab $w={192} $pull={-4}>
              <SiteIcon color="#111" />
              <TabLabel $w={160} $track={0.23}>Development Portal</TabLabel>
              <CloseX color="#dedad1" />
            </Tab>
            <TabDivider />
            <Centered $w={16}><PlusIcon /></Centered>
          </TabStrip>
          <Toolbar>
            <BackButton><NavArrow size={15} /></BackButton>
            <UrlBar>
              <ForwardButton><NavArrow flip size={13} /></ForwardButton>
              <Centered $w={26}><InfoIcon /></Centered>
              <Rule />
              <UrlText><b>localhost</b>:1337/index.html</UrlText>
              <Rule />
              <Centered $w={32}><ReloadIcon /></Centered>
            </UrlBar>
            <SearchBox><Magnifier /><SearchHint>Search</SearchHint></SearchBox>
            <Centered $w={37} $lead={7}>{toolbarIcons.star}</Centered>
            <Rule $h={18} />
            <Centered $w={29} $lead={1}>{toolbarIcons.clip}</Centered>
            <Centered $w={47}>{toolbarIcons.pocket}</Centered>
            <Centered $w={29}>{toolbarIcons.down}</Centered>
            <Centered $w={47}>{toolbarIcons.home}</Centered>
            <Centered $w={29}>{toolbarIcons.smile}</Centered>
            <Centered $w={32} $lead={10}>{toolbarIcons.bug}</Centered>
            <Rule $h={18} />
            <Centered $w={15}><Tri down w={8} h={5} color="#666" /></Centered>
            <Space $w={5} />
            <Rule $h={34} />
            <Space $w={13} />
            <Burger />
          </Toolbar>
          <Viewport>
            <Page>
              <CardFoot />
              <Dots>{Array.from({ length: 10 }, (_, i) => <Dot key={i} $on={i === 0} />)}</Dots>
              <CompareRow>
                <CompareButton>Compare all countries</CompareButton>
                <CompareButton>Compare all agencies</CompareButton>
                <CompareButton>Compare all sectors</CompareButton>
              </CompareRow>
              <Columns>
                <Column $w={571}>
                  <Select $open>
                    <SelectLabel>Type or select to search for a recipient country</SelectLabel>
                    <Tri w={9} h={7} color="#888" />
                  </Select>
                  <Menu>
                    <Filter><Caret /><Magnifier s={15} color="#999" bold /></Filter>
                    <MenuBody>
                      <Options>
                        {options.map((o) => <Option key={o} $hot={o === "Anguilla"}>{o}</Option>)}
                      </Options>
                      <Scrollbar thumb={31} faded />
                    </MenuBody>
                  </Menu>
                  <Scroller>
                    <List $w={528} $gap={30} $skip={324.85}>
                      <Divider />
                      {countries.map(([code, name]) => (
                        <Item key={code} $track={0.5}>
                          <FlagBox>{flags[code]}</FlagBox>
                          <Code>{code}</Code>
                          {name}
                        </Item>
                      ))}
                    </List>
                    <Scrollbar thumb={40} cut faded />
                  </Scroller>
                </Column>
                <Column $w={552}>
                  <Select>
                    <SelectLabel>Type or select to search for a sector</SelectLabel>
                    <Tri down w={9} h={7} color="#888" />
                  </Select>
                  <Scroller $indent={7}>
                    <List $w={529}>
                      {sectors.map(([name, track]) => <Item key={name} $track={track}>{name}</Item>)}
                    </List>
                    <Scrollbar thumb={225} cut faded />
                  </Scroller>
                </Column>
              </Columns>
            </Page>
            <Scrollbar offset={397} thumb={195} />
          </Viewport>
        </Window>
      </Work>
    </Desktop>
  );
}
